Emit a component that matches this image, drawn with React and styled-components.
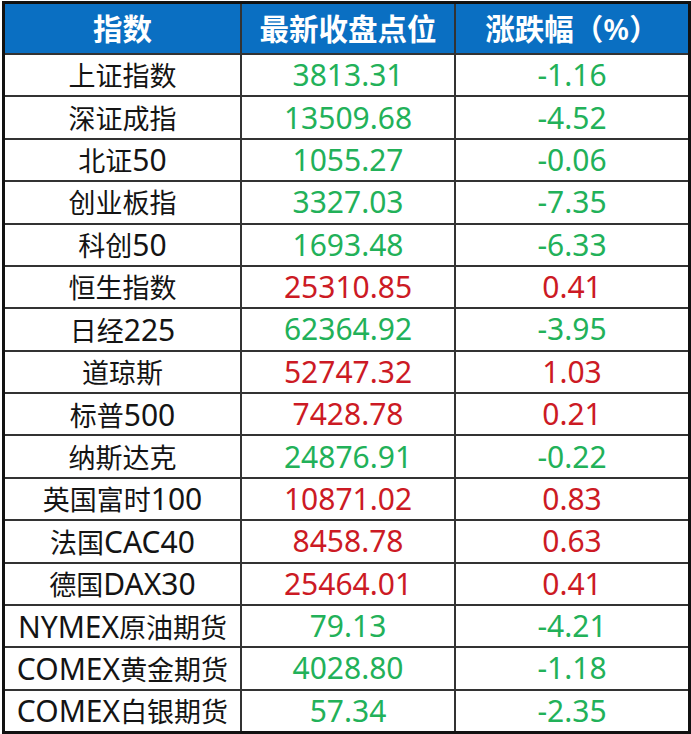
import React from "react";
import styled, { createGlobalStyle } from "styled-components";

const rows = [
  ["上证指数", "3813.31", "-1.16"],
  ["深证成指", "13509.68", "-4.52"],
  ["北证50", "1055.27", "-0.06"],
  ["创业板指", "3327.03", "-7.35"],
  ["科创50", "1693.48", "-6.33"],
  ["恒生指数", "25310.85", "0.41"],
  ["日经225", "62364.92", "-3.95"],
  ["道琼斯", "52747.32", "1.03"],
  ["标普500", "7428.78", "0.21"],
  ["纳斯达克", "24876.91", "-0.22"],
  ["英国富时100", "10871.02", "0.83"],
  ["法国CAC40", "8458.78", "0.63"],
  ["德国DAX30", "25464.01", "0.41"],
  ["NYMEX原油期货", "79.13", "-4.21"],
  ["COMEX黄金期货", "4028.80", "-1.18"],
  ["COMEX白银期货", "57.34", "-2.35"],
];

// latin runs render larger, like YaHei's built-in latin glyphs
const mixed = (text) =>
  text.split(/([A-Za-z0-9.%\-]+)/).filter(Boolean).map((part, i) =>
    /^[A-Za-z0-9.%\-]+$/.test(part) ? <Latin key={i}>{part}</Latin> : <span key={i}>{part}</span>
  );

export default function App() {
  return (
    <>
      <GlobalStyle />
      <Page>
        <Table>
          <HeadCell>指数</HeadCell>
          <HeadCell>最新收盘点位</HeadCell>
          <HeadCell>涨跌幅（%）</HeadCell>
          {rows.map(([name, close, pct]) => {
            const up = !pct.startsWith("-");
            return (
              <React.Fragment key={name}>
                <NameCell>
                  <Label>{mixed(name)}</Label>
                </NameCell>
                <NumCell $up={up}>{close}</NumCell>
                <NumCell $up={up}>{pct}</NumCell>
              </React.Fragment>
            );
          })}
        </Table>
      </Page>
    </>
  );
}

const GlobalStyle = createGlobalStyle`
  html, body {
    margin: 0;
    padding: 0;
    background: #ffffff;
  }
  body {
    font-family: "Noto Sans", "Noto Sans CJK SC", sans-serif;
  }
`;

const Page = styled.div`
  padding: 1px 0 0 2px;
`;

const Table = styled.div`
  display: grid;
  grid-template-columns: 235px 212px 232px;
  grid-template-rows: 49px repeat(16, 40.375px);
  gap: 2px;
  width: max-content;
  background: #333333;
  border: 3px solid #111111;
`;

const Cell = styled.div`
  display: flex;
  align-items: center;
  justify-content: center;
  background: #ffffff;
  font-size: 27px;
  line-height: 1;
  white-space: nowrap;
`;

const HeadCell = styled(Cell)`
  background: #0a6fc2;
  color: #ffffff;
  font-size: 29.5px;
  font-weight: 600;
`;

const NameCell = styled(Cell)`
  color: #141414;
`;

const Label = styled.span`
  display: block;
  line-height: 32px;
  padding-top: 2px;
`;

const Latin = styled.span`
  font-size: 30px;
`;

const NumCell = styled(Cell)`
  font-size: 30px;
  color: ${(p) => (p.$up ? "#cc1a24" : "#22b159")};
`;
